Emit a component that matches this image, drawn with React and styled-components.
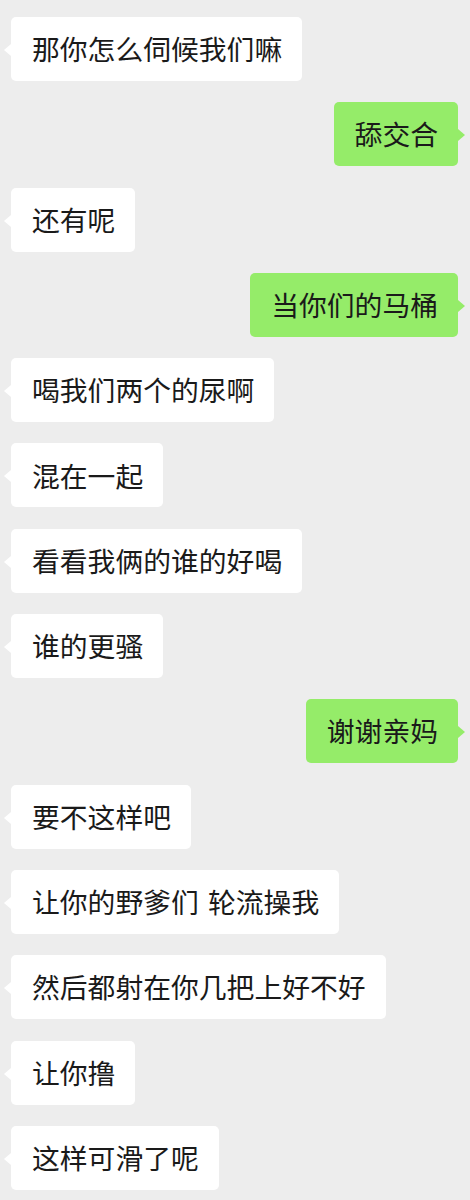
import React from "react";
import styled, { createGlobalStyle } from "styled-components";

const messages = [
  { side: "left", text: "那你怎么伺候我们嘛" },
  { side: "right", text: "舔交合" },
  { side: "left", text: "还有呢" },
  { side: "right", text: "当你们的马桶" },
  { side: "left", text: "喝我们两个的尿啊" },
  { side: "left", text: "混在一起" },
  { side: "left", text: "看看我俩的谁的好喝" },
  { side: "left", text: "谁的更骚" },
  { side: "right", text: "谢谢亲妈" },
  { side: "left", text: "要不这样吧" },
  { side: "left", text: "让你的野爹们 轮流操我" },
  { side: "left", text: "然后都射在你几把上好不好" },
  { side: "left", text: "让你撸" },
  { side: "left", text: "这样可滑了呢" },
];

const GlobalStyle = createGlobalStyle`
  html, body {
    margin: 0;
    padding: 0;
    background: #ededed;
  }
`;

const ChatList = styled.div`
  width: 470px;
  min-height: 1200px;
  box-sizing: border-box;
  padding: 17px 12px 0 11px;
  display: flex;
  flex-direction: column;
  gap: 21.3px;
  background: #ededed;
  font-family: "Noto Sans CJK SC", "Noto Sans", sans-serif;
`;

const Row = styled.div`
  display: flex;
  justify-content: ${(p) => (p.$side === "right" ? "flex-end" : "flex-start")};
`;

const Bubble = styled.div`
  position: relative;
  height: 64px;
  box-sizing: border-box;
  padding: 0 20px 0 21px;
  display: flex;
  align-items: center;
  border-radius: 5px;
  background: ${(p) => (p.$side === "right" ? "#95ec69" : "#ffffff")};
  color: #1a1a1a;
  font-size: 27.8px;
  line-height: 1;
  word-spacing: 3px;
  white-space: pre;

  &::before {
    content: "";
    position: absolute;
    top: 27px;
    ${(p) => (p.$side === "right" ? "right: -7px;" : "left: -7px;")}
    border-top: 6px solid transparent;
    border-bottom: 6px solid transparent;
    ${(p) =>
      p.$side === "right"
        ? "border-left: 7px solid #95ec69;"
        : "border-right: 7px solid #ffffff;"}
  }
`;

const App = () => {
  return (
    <>
      <GlobalStyle />
      <ChatList>
        {messages.map((m, i) => (
          <Row key={i} $side={m.side}>
            <Bubble $side={m.side}>{m.text}</Bubble>
          </Row>
        ))}
      </ChatList>
    </>
  );
};

export default App;
